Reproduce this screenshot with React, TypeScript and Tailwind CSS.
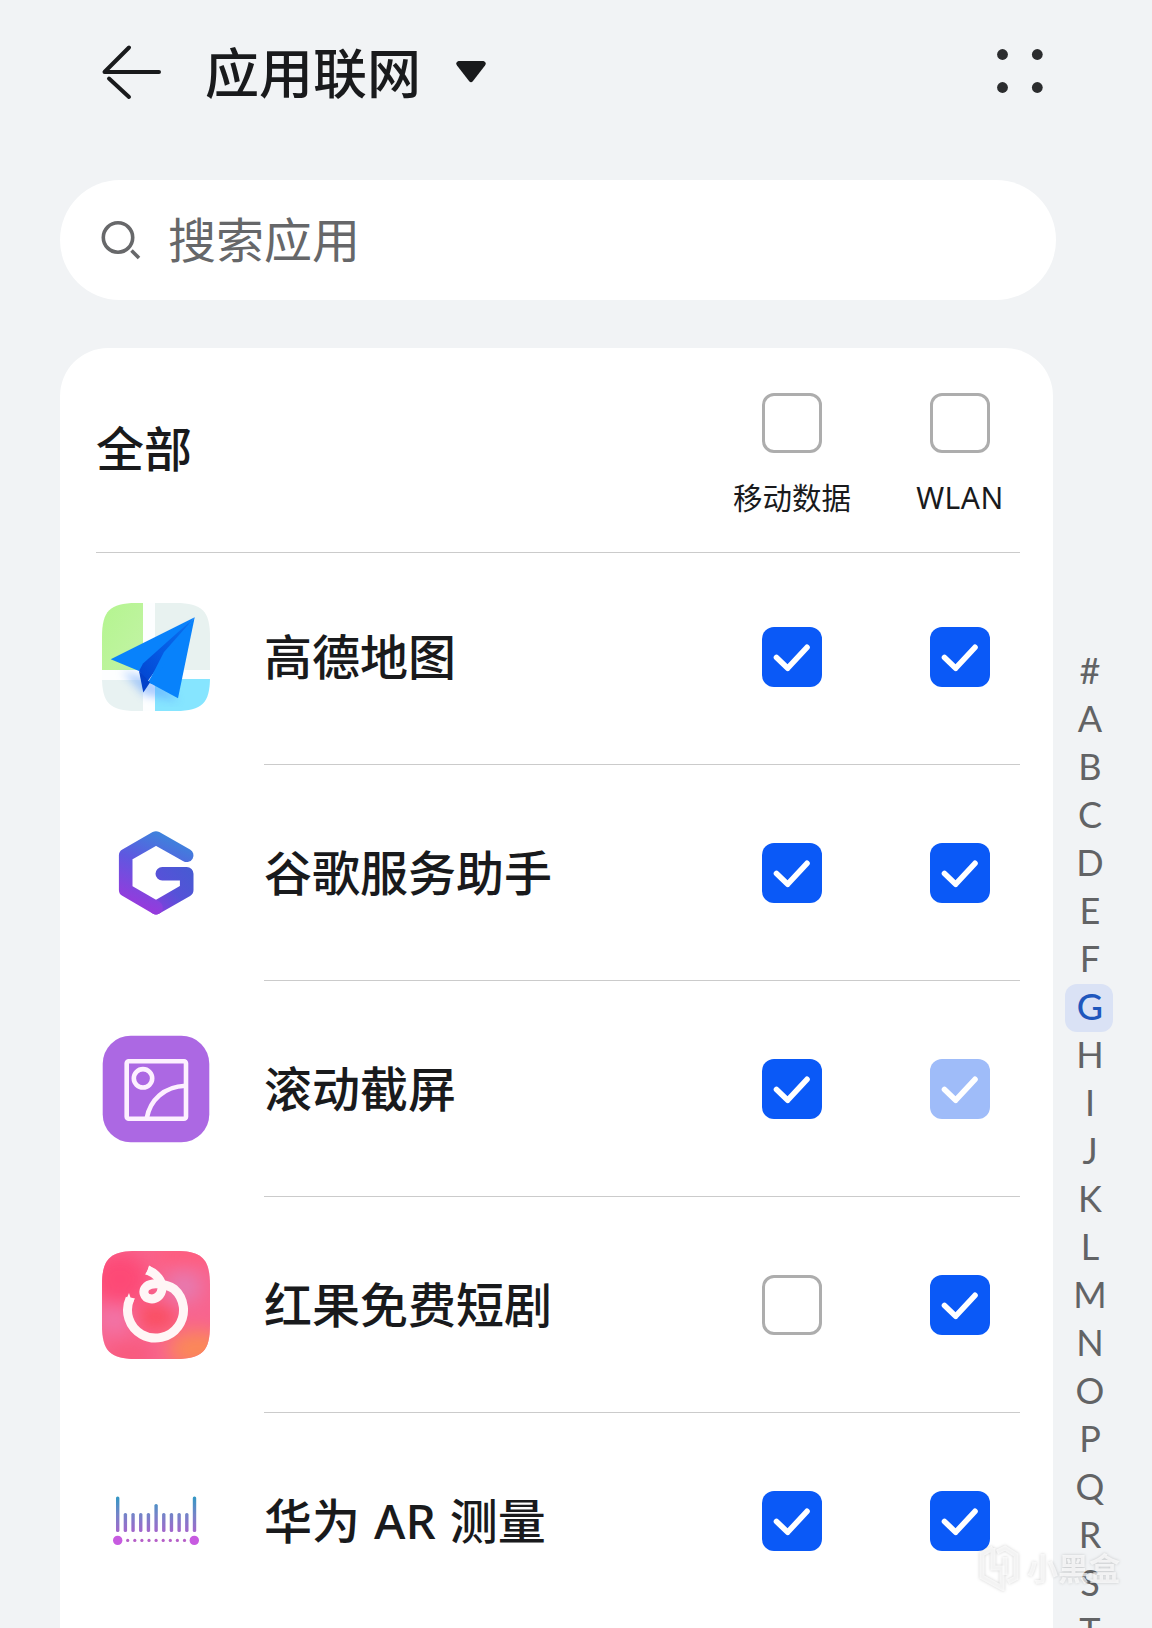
import { useState } from "react";
import type { ReactNode } from "react";
import clsx from "clsx";

type CheckState = "on" | "off" | "locked";

interface AppItem {
  id: string;
  name: string;
  icon: ReactNode;
  mobile: CheckState;
  wlan: CheckState;
}

const LETTERS = "#ABCDEFGHIJKLMNOPQRST".split("");

const AmapIcon = () => (
  <svg viewBox="0 0 108 108" className="size-[108px]">
    <defs>
      <clipPath id="amap-clip">
        <path d="M0 34C0 8 8 0 34 0H74C100 0 108 8 108 34V74C108 100 100 108 74 108H34C8 108 0 100 0 74Z" />
      </clipPath>
      <linearGradient id="amap-green" x1="0" y1="0" x2="1" y2="1">
        <stop offset="0" stopColor="#b4f58f" />
        <stop offset="1" stopColor="#c3f3a6" />
      </linearGradient>
      <linearGradient id="amap-fold" x1="1" y1="0" x2="0" y2="1">
        <stop offset="0" stopColor="#0a74f0" />
        <stop offset=".6" stopColor="#0558e2" />
        <stop offset="1" stopColor="#0344cf" />
      </linearGradient>
      <filter id="amap-shadow" x="-20%" y="-20%" width="140%" height="140%">
        <feGaussianBlur stdDeviation="4" />
      </filter>
    </defs>
    <g clipPath="url(#amap-clip)">
      <rect width="108" height="108" fill="#fdfeff" />
      <rect width="41" height="67" fill="url(#amap-green)" />
      <rect x="53" width="55" height="67" fill="#e8f2f0" />
      <rect y="77" width="41" height="31" fill="#e8f2f2" />
      <rect x="53" y="76" width="55" height="32" fill="#86e5ff" />
      <path d="M20 68L42 92L76 98L60 80Z" fill="#5b9dff" opacity=".5" filter="url(#amap-shadow)" />
    </g>
    <path d="M92.7 14.3L8.7 56.3L37 68Z" fill="#0882fb" />
    <path d="M92.7 14.3L46 79L76 95.3Z" fill="#0882fb" />
    <path d="M92.7 14.3L41 60.500L37 68L45 79Z" fill="url(#amap-fold)" />
    <path d="M92.7 14.3L62 49L46.500 79.300L50 81Z" fill="#0882fb" />
    <path d="M37 68L41.3 89.5L48 79.5Z" fill="#0341c9" />
  </svg>
);

const GoogleHelperIcon = () => (
  <svg viewBox="0 0 108 108" className="size-[108px]" fill="none">
    <defs>
      <linearGradient id="g-base" gradientUnits="userSpaceOnUse" x1="66" y1="14" x2="34" y2="90">
        <stop offset="0" stopColor="#3b86dc" />
        <stop offset=".45" stopColor="#5f58e0" />
        <stop offset="1" stopColor="#9a38dc" />
      </linearGradient>
      <linearGradient id="g-right" gradientUnits="userSpaceOnUse" x1="92" y1="50" x2="48" y2="90">
        <stop offset="0" stopColor="#465bd2" />
        <stop offset=".5" stopColor="#5552d8" />
        <stop offset="1" stopColor="#8a3cdc" />
      </linearGradient>
    </defs>
    <g strokeWidth="13.6" strokeLinecap="round" strokeLinejoin="round">
      <path d="M54 88.7L84.7 71V54.7H60.3" stroke="url(#g-right)" />
      <path d="M84.7 36.3L54 19L23.7 36.3V71L54 88.7" stroke="url(#g-base)" />
    </g>
  </svg>
);

const ScrollShotIcon = () => (
  <svg viewBox="0 0 108 108" className="size-[108px]" fill="none">
    <rect x=".7" y=".7" width="106.6" height="106.6" rx="28" fill="#ac68e3" />
    <g stroke="#fdf0ff" strokeWidth="4.600">
      <rect x="24.7" y="26.3" width="59.3" height="57.4" rx="2" />
      <circle cx="41" cy="43.3" r="9.2" />
      <path d="M44.7 83.3C48 65 62 51.5 83.5 50.7" />
    </g>
  </svg>
);

const HongguoIcon = () => (
  <svg viewBox="0 0 108 108" className="size-[108px]" fill="none">
    <defs>
      <clipPath id="hg-clip">
        <path d="M0 34C0 8 8 0 34 0H74C100 0 108 8 108 34V74C108 100 100 108 74 108H34C8 108 0 100 0 74Z" />
      </clipPath>
      <filter id="hg-blur" x="-50%" y="-50%" width="200%" height="200%">
        <feGaussianBlur stdDeviation="9" />
      </filter>
    </defs>
    <g clipPath="url(#hg-clip)">
      <rect width="108" height="108" fill="#f8648e" />
      <g filter="url(#hg-blur)">
        <ellipse cx="18" cy="28" rx="28" ry="26" fill="#fd4a76" />
        <ellipse cx="84" cy="4" rx="34" ry="10" fill="#ff5c7c" />
        <ellipse cx="82" cy="36" rx="18" ry="16" fill="#e67ab0" />
        <ellipse cx="12" cy="68" rx="18" ry="14" fill="#f274a8" />
        <ellipse cx="54" cy="66" rx="20" ry="12" fill="#fa4c5c" />
        <ellipse cx="96" cy="98" rx="30" ry="18" fill="#fb8858" />
        <ellipse cx="28" cy="104" rx="24" ry="12" fill="#f8587c" />
      </g>
    </g>
    <path
      d="M45.5 19C55 23 60.500 30 60 37.500C59.500 44.500 54 48.500 48.500 47.800C41.500 47 40 39.500 44.500 35.500C50 31 64 32.500 72 38A28 28 0 1 1 28 47.5"
      stroke="#fff6f6"
      strokeWidth="9"
    />
    <path d="M24 49L27 42L28.500 46.500L33 47.500L31 51Z" fill="#fff6f6" />
    <path d="M47 14.500L46 19L43 23.500L50 24L52 18Z" fill="#fff6f6" />
  </svg>
);

const ArMeasureIcon = () => (
  <svg viewBox="0 0 108 108" className="size-[108px]">
    <defs>
      <linearGradient id="ar-bar" gradientUnits="userSpaceOnUse" x1="0" y1="29" x2="0" y2="66">
        <stop offset="0" stopColor="#2f98c4" />
        <stop offset=".5" stopColor="#7484c8" />
        <stop offset="1" stopColor="#a565cc" />
      </linearGradient>
    </defs>
    {Array.from({ length: 11 }, (_, i) => {
      const top = i === 0 || i === 10 ? 29.5 : i === 5 ? 37 : 46;
      return (
        <rect key={i} x={14 + i * 7.68} y={top} width="3.4" height={65 - top} rx="1.6" fill="url(#ar-bar)" />
      );
    })}
    {Array.from({ length: 9 }, (_, i) => (
      <circle key={i} cx={25.7 + i * 7.1} cy="73.4" r="1.6" fill="#b65fc8" />
    ))}
    <circle cx="15.7" cy="73.4" r="4.7" fill="#c75be0" />
    <circle cx="92.3" cy="73.4" r="4.7" fill="#c75be0" />
  </svg>
);

const APPS: AppItem[] = [
  { id: "amap", name: "高德地图", icon: <AmapIcon />, mobile: "on", wlan: "on" },
  { id: "google", name: "谷歌服务助手", icon: <GoogleHelperIcon />, mobile: "on", wlan: "on" },
  { id: "scroll", name: "滚动截屏", icon: <ScrollShotIcon />, mobile: "on", wlan: "locked" },
  { id: "hongguo", name: "红果免费短剧", icon: <HongguoIcon />, mobile: "off", wlan: "on" },
  { id: "ar", name: "华为 AR 测量", icon: <ArMeasureIcon />, mobile: "on", wlan: "on" },
];

function Checkbox({ state, label, onToggle }: { state: CheckState; label: string; onToggle?: () => void }) {
  return (
    <button
      type="button"
      role="checkbox"
      aria-checked={state !== "off"}
      aria-label={label}
      disabled={state === "locked"}
      onClick={onToggle}
      className={clsx(
        "block size-[60px] shrink-0 rounded-xl",
        state === "off" && "border-3 border-[#adadad] bg-white",
        state === "on" && "bg-[#0a59f7]",
        state === "locked" && "bg-[#9fbcf9]"
      )}
    >
      {state !== "off" && (
        <svg viewBox="0 0 60 60" className="size-[60px]" fill="none">
          <path
            d="M14.500 30.500L25.700 41.200L45 20.300"
            stroke="#fff"
            strokeWidth="5.600"
            strokeLinecap="round"
            strokeLinejoin="round"
          />
        </svg>
      )}
    </button>
  );
}

function AppRow({ app, last }: { app: AppItem; last: boolean }) {
  const [mobile, setMobile] = useState(app.mobile);
  const [wlan, setWlan] = useState(app.wlan);

  return (
    <li className="flex h-[216px]">
      <div className="flex w-[168px] shrink-0 items-center pl-1.5">{app.icon}</div>
      <div className={clsx("flex flex-1 items-center border-b pt-px pr-[30px]", last ? "border-transparent" : "border-[#cbcbcb]")}>
        <span className="flex-1 text-[48px] leading-none font-medium [word-spacing:1.5px] whitespace-nowrap">{app.name}</span>
        <div className="flex gap-[108px]">
          <Checkbox
            state={mobile}
            label={`${app.name} 移动数据`}
            onToggle={() => setMobile(mobile === "on" ? "off" : "on")}
          />
          <Checkbox
            state={wlan}
            label={`${app.name} WLAN`}
            onToggle={() => setWlan(wlan === "on" ? "off" : "on")}
          />
        </div>
      </div>
    </li>
  );
}

function TitleBar() {
  return (
    <header className="flex h-[144px] items-center pr-[109px] pl-[102px]">
      <svg viewBox="0 0 60 56" className="h-[56px] w-[60px]" fill="none" stroke="#191a1c" strokeWidth="4" strokeLinecap="round">
        <path d="M57 28H2.500L27 3.500" strokeLinejoin="round" />
        <path d="M7 34.500L27 53" />
      </svg>
      <h1 className="mt-0.5 ml-[43px] text-[54px] leading-none font-medium">应用联网</h1>
      <svg viewBox="0 0 30 22" className="ml-[35px] h-[22px] w-[30px]">
        <path d="M2.500 0H27.500Q31 1.500 29 4.500L17 20Q15 22.500 13 20L1 4.500Q-1 1.500 2.500 0Z" fill="#191a1c" />
      </svg>
      <svg viewBox="0 0 46 44" className="mb-0.5 ml-auto h-[44px] w-[46px]" fill="#2b2c2e">
        <circle cx="5.500" cy="5.500" r="5.400" />
        <circle cx="40.300" cy="5.500" r="5.400" />
        <circle cx="5.500" cy="38.500" r="5.400" />
        <circle cx="40.300" cy="38.500" r="5.400" />
      </svg>
    </header>
  );
}

function SearchBox() {
  return (
    <div className="mt-9 ml-[60px] flex h-[120px] w-[996px] items-center rounded-full bg-white pl-[41px]">
      <svg viewBox="0 0 40 40" className="size-10" fill="none" stroke="#67686a" strokeWidth="3.600">
        <circle cx="17" cy="17.500" r="14.700" />
        <path d="M30.500 30.500L38 38" />
      </svg>
      <span className="-mt-px ml-[27px] text-[48px] leading-none text-[#666769]">搜索应用</span>
    </div>
  );
}

function Watermark() {
  return (
    <div className="pointer-events-none absolute top-[1545px] left-[979px] flex items-center gap-2 text-white/70 drop-shadow-[0_0_1.500px_rgba(0,0,0,0.25)]">
      <svg viewBox="0 0 40 46" className="h-[46px] w-[40px]" fill="none" stroke="currentColor" strokeWidth="5">
        <path d="M14 3L3 9V32L23 43V23H14V3" />
        <path d="M18 7L26 3L37 10V33L29 37" />
        <path d="M26 12V30" />
      </svg>
      <span className="text-[31px] leading-none font-bold">小黑盒</span>
    </div>
  );
}

export default function App() {
  const [active, setActive] = useState("G");

  return (
    <main className="relative h-[1628px] w-[1152px] overflow-hidden bg-[#f1f3f5] font-['Noto_Sans','Noto_Sans_CJK_SC',sans-serif] text-[#191a1c]">
      <TitleBar />
      <SearchBox />
      <div className="mt-12 flex pl-[60px]">
        <section className="h-[1280px] w-[993px] shrink-0 rounded-t-[48px] bg-white pr-[33px] pl-[36px]">
          <div className="flex h-[205px] items-start border-b border-[#cbcbcb] pt-[45px] pr-[14px]">
            <h2 className="mt-8 flex-1 text-[48px] leading-none font-medium">全部</h2>
            <div className="flex w-[120px] flex-col items-center">
              <Checkbox state="off" label="移动数据" />
              <span className="mt-[30px] text-[29.500px] leading-none whitespace-nowrap">移动数据</span>
            </div>
            <div className="ml-[62px] flex w-[92px] flex-col items-center">
              <Checkbox state="off" label="WLAN" />
              <span className="mt-[30px] text-[30px] leading-none tracking-[0.5px]">WLAN</span>
            </div>
          </div>
          <ul className="-mt-1">
            {APPS.map((app, i) => (
              <AppRow key={app.id} app={app} last={i === APPS.length - 1} />
            ))}
          </ul>
        </section>
        <nav className="mt-[300px] ml-3 flex w-12 flex-col font-[Lato,sans-serif]">
          {LETTERS.map((letter) => (
            <button
              key={letter}
              type="button"
              onClick={() => setActive(letter)}
              className={clsx(
                "flex h-12 w-12 shrink-0 items-center justify-center rounded-xl pb-1 pl-0.5 text-[36px] leading-none",
                letter === active ? "bg-[#dae2f5] font-medium text-[#1f57bd]" : "text-[#626365]"
              )}
            >
              {letter}
            </button>
          ))}
        </nav>
      </div>
      <Watermark />
    </main>
  );
}
